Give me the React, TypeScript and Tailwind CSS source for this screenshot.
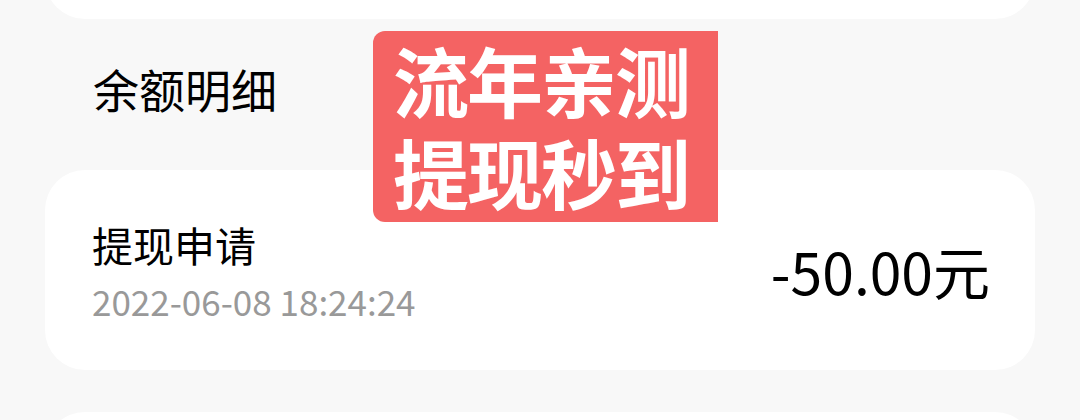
export default function App() {
  return (
    <div
      className="relative h-[420px] w-[1080px] overflow-hidden bg-[#f8f8f8] text-black"
      style={{ fontFamily: '"Noto Sans CJK SC", "Noto Sans", sans-serif' }}
    >
      <div className="mx-[45px] -mt-[80px] h-[99px] rounded-[40px] bg-white" />

      <div className="flex h-[151px] items-center pl-[93px] pb-[13px] text-[46px] leading-none">
        余额明细
      </div>

      <div className="mx-[45px] flex h-[200px] items-center justify-between rounded-[40px] bg-white pl-[47px] pr-[45px]">
        <div className="flex flex-col pt-[2px]">
          <div className="text-[41px] leading-none">提现申请</div>
          <div className="mt-[18px] text-[35px] leading-none text-[#999999]">2022-06-08 18:24:24</div>
        </div>
        <div className="text-[57px] leading-none">-50.00元</div>
      </div>

      <div className="mx-[45px] mt-[42px] h-[100px] rounded-[40px] bg-white" />

      <div className="absolute left-[373px] top-[31px] flex h-[191px] w-[345px] flex-col justify-center rounded-l-[12px] bg-[#f46363] pb-[4px] pl-[20px] text-[76px] font-bold leading-[92px] tracking-[-2px] text-white">
        <div>流年亲测</div>
        <div>提现秒到</div>
      </div>
    </div>
  );
}
